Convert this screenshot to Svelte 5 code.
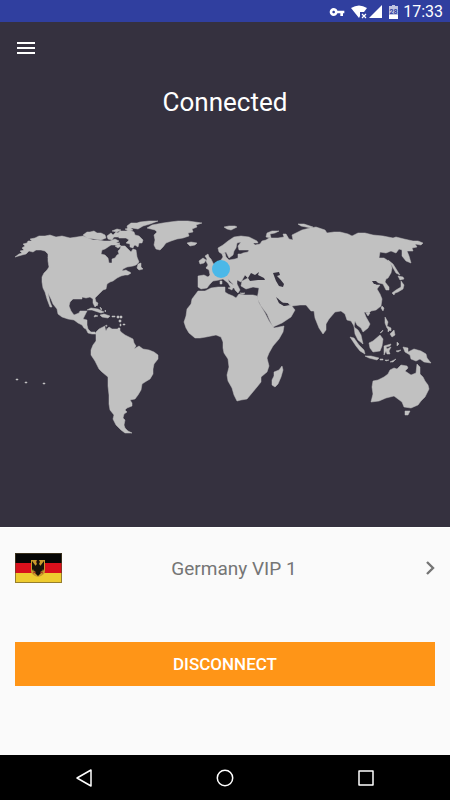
<script>
  let connected = $state(true);
  const server = 'Germany VIP 1';

  const land = [
    // North America
    'M15 257 19 254 22 253 20 251 24 250 22 248 25 246 23 244 27 243 28 241 32 241 30 239 35 238 39 236 45 236 50 235 56 237 62 236 70 238 77 237 83 236 88 238 93 240 98 240 104 241 110 241 115 239 119 241 116 243 120 243 117 245 111 245 108 247 105 249 102 250 101 254 105 255 108 258 109 263 112 263 112 259 115 258 117 255 119 254 118 251 120 249 121 246 125 246 128 249 131 252 133 249 136 250 137 257 139 262 136 265 133 266 127 267 123 269 122 271 126 270 129 272 131 273 128 275 125 275 121 276 117 278 113 281 110 282 107 284 106 289 103 290 100 293 97 296 95 298 96 302 97 305 95 307 93 303 93 299 90 297 86 298 82 297 82 299 77 299 73 299 70 302 69 306 71 311 74 315 79 313 80 311 84 311 87 311 85 315 83 319 87 320 87 325 88 329 91 332 95 332 96 334 92 334 88 333 86 329 84 328 82 325 78 323 74 320 68 319 62 317 58 314 57 309 53 304 51 299 48 293 50 302 52 307 50 307 47 299 45 292 43 288 42 282 42 277 44 273 47 270 49 267 48 261 48 254 45 251 41 250 36 250 33 252 29 251 26 254 22 255Z',
    'M83 235 87 232 90 232 94 231 97 233 101 233 105 235 106 238 101 240 94 239 87 238Z',
    'M107 236 111 233 113 235 116 232 120 234 118 237 114 237 112 240 108 239Z',
    'M117 234 120 231 126 231 129 230 134 232 135 235 139 236 143 240 142 243 139 243 138 247 135 245 132 247 130 244 126 243 129 240 126 238 119 238Z',
    'M127 226 131 223 137 223 140 222 149 221 158 221 150 224 143 226 138 229 132 228 128 230Z',
    'M112 231 117 229 121 230 117 232ZM125 229 130 228 133 230 129 231ZM130 244 134 245 133 248 130 247ZM115 246 119 244 121 246 118 248Z',
    'M137 268 138 264 141 263 141 267 143 269 139 270ZM125 272 130 272 129 274ZM49 264 51 264 53 268 51 269ZM48 257 50 259 50 262Z',
    // Caribbean
    'M87 310 91 308 98 309 104 312 101 313 92 310ZM100 315 104 314 110 316 108 318 102 317ZM95 315 98 316 94 317ZM112 316h3v1h-3zM96 302 98 303 97 306ZM100 307 102 309 101 310ZM105 310 106 311 105 312Z',
    'M117 316h2v2h-2zM120 316h2v2h-2zM119 320h2v2h-2zM120 324h1v2h-1zM123 324h2v1h-2zM118 328h2v2h-2z',
    // Greenland, Iceland and Svalbard
    'M147 228 152 225 163 223 170 222 178 221 188 221 195 222 202 223 196 225 197 227 192 229 193 232 188 233 189 236 183 238 177 239 171 241 166 243 163 247 160 250 156 249 154 245 155 240 154 235 157 232 155 230Z',
    'M187 243 191 242 197 243 195 245 190 246ZM224 227 229 226 235 226 237 227 231 230 227 229Z',
    // South America
    'M96 332 99 329 103 327 107 325 106 330 109 327 112 329 119 329 121 332 125 335 129 337 133 339 134 343 136 346 134 349 139 346 143 349 149 350 154 352 158 355 158 359 154 364 153 369 153 374 150 379 145 382 142 384 141 390 138 395 135 399 130 400 132 403 132 406 127 408 125 410 127 412 124 414 123 418 125 420 124 425 125 428 128 431 132 433 125 433 121 430 116 425 113 419 114 415 110 410 109 404 109 395 108 386 108 377 102 372 99 369 95 361 91 355 91 350 93 345 96 341Z',
    // Africa
    'M198 291 205 291 211 288 218 287 225 287 225 292 228 294 233 296 236 298 239 294 245 295 253 295 257 296 259 303 265 313 269 321 274 328 284 326 283 332 279 339 273 346 269 353 267 358 269 366 267 372 261 377 261 382 257 387 252 393 247 399 241 400 237 401 234 395 232 388 228 381 227 375 229 367 228 359 224 353 223 348 223 342 221 337 216 335 211 336 206 337 200 338 195 338 189 333 186 328 184 322 186 316 187 309 191 304 192 299Z',
    'M282 366 283 370 281 377 278 384 275 387 272 385 272 380 274 376 274 372 279 370Z',
    // Iberia to the Baltic, Russia, China, India and Arabia
    'M198 276 204 275 208 277 210 275 209 270 206 268 210 267 213 266 216 263 221 260 223 257 222 254 225 253 226 257 229 260 235 259 238 258 238 254 241 254 243 253 248 252 249 250 243 250 239 250 238 246 241 242 237 243 236 248 234 251 233 255 229 258 226 252 222 254 219 252 218 248 223 245 228 241 234 237 241 236 249 237 257 241 258 243 253 243 255 245 260 244 262 241 266 240 269 238 278 238 284 237 283 234 286 234 289 239 293 240 292 235 296 233 302 230 310 228 316 227 325 230 327 233 334 232 340 232 348 234 352 236 358 233 365 233 373 235 383 236 393 238 396 237 404 239 413 241 418 241 423 243 421 245 415 244 417 247 412 248 413 251 407 251 409 256 411 263 406 261 402 256 402 250 399 249 396 253 391 251 386 253 380 252 379 258 384 258 390 262 392 268 391 273 388 278 386 279 385 282 389 287 389 290 386 290 383 284 379 283 374 282 376 285 380 285 377 289 380 294 382 299 381 306 376 310 371 311 369 313 364 312 366 317 370 324 368 328 363 332 361 328 357 325 355 321 354 327 358 330 361 335 363 344 358 340 355 334 354 326 351 321 347 320 345 314 341 311 335 312 329 319 326 324 326 330 323 334 319 328 315 318 314 311 311 311 306 305 300 305 292 306 287 303 280 302 278 298 279 303 284 306 291 305 295 310 291 317 282 323 273 327 270 321 267 314 261 306 257 298 258 294 259 288 253 287 246 289 241 286 242 281 248 278 245 275 241 282 237 280 237 284 240 290 238 293 235 290 233 284 228 279 229 282 235 286 235 288 231 288 228 283 223 279 219 280 213 281 210 284 207 288 201 289 198 287Z',
    // British Isles and Mediterranean islands
    'M205 256 208 254 209 257 211 259 213 263 215 266 212 268 206 268 208 265 206 261 207 259ZM199 261 203 258 206 260 204 263 200 264ZM220 281h2v3h-2zM228 288 233 287 232 290ZM240 293 245 293 243 294Z',
    'M266 237 267 233 272 231 279 231 275 233 270 234 271 238ZM298 224 304 224 313 227 311 228 301 226Z',
    // Japan, Philippines and Indonesia
    'M388 260 393 264 398 272 400 275 396 273 392 266ZM398 276 403 277 404 279 400 280ZM401 281 404 285 403 289 398 292 395 293 394 295 392 293 396 290 401 287Z',
    'M382 306 384 308 383 311 381 308ZM366 313 370 313 368 316ZM385 317 388 322 387 326 391 328 391 331 387 328 385 323ZM390 334 394 330 395 335 392 337ZM388 327 390 330 388 332ZM383 330 380 333 382 332Z',
    'M350 337 354 338 359 345 364 350 365 354 360 351 356 346ZM365 356 371 356 379 358 377 360 369 358ZM380 359h3v1h-3zM385 360h4l-3 1zM390 362 396 359 393 362Z',
    'M369 343 373 341 380 335 383 339 382 346 380 351 373 352 370 348ZM384 346 391 344 390 346 386 347 387 349 391 347 389 351 390 354 387 354 386 351 384 355ZM397 342 399 344 397 346ZM396 351 401 350 398 352Z',
    'M403 347 408 348 408 352 414 349 421 351 426 354 427 358 431 363 424 362 420 359 416 361 411 359 410 355 405 352Z',
    // Australia
    'M373 381 378 380 384 377 388 374 390 370 394 368 397 369 401 365 407 366 408 368 405 371 411 375 416 373 417 364 420 367 420 374 423 377 425 381 428 385 429 389 425 397 421 401 418 405 411 408 404 407 402 402 398 399 394 396 386 398 379 401 371 402 373 394 372 387Z',
    'M405 411 410 411 408 415 405 415Z',
    // Hawaii
    'M16 379h2v1h-2zM25 382h2v1h-2zM43 383h2v1h-2z'
  ];

  const seas = [
    'M248 278 251 273 255 275 259 272 258 275 264 278 265 280 258 280 250 281Z',
    'M273 273 279 272 280 275 277 276 280 279 284 284 283 287 279 286 276 281Z',
    'M276 297 283 303 288 303 289 305 284 306 279 303ZM372 281 376 281 379 284 374 284ZM105 326 107 327 106 331Z'
  ];
</script>

<div class="screen">
  <header class="status">
    <svg class="key" viewBox="0 0 24 24" aria-hidden="true">
      <path fill-rule="evenodd" d="M12.65 10C11.83 7.67 9.61 6 7 6c-3.31 0-6 2.69-6 6s2.69 6 6 6c2.61 0 4.83-1.67 5.65-4H17v4h4v-4h2v-4H12.65zM7 14c-1.1 0-2-.9-2-2s.9-2 2-2 2 .9 2 2-.9 2-2 2z" />
    </svg>
    <svg class="signal" viewBox="0 0 32 14" aria-hidden="true">
      <path d="M0 3Q8-2 16 3L13 7H9v4L8 13z" />
      <path class="cross" d="M11 9l4 4M15 9l-4 4" />
      <path d="M31 0v13H18z" />
    </svg>
    <svg class="battery" viewBox="0 0 9 14" aria-hidden="true">
      <path opacity="0.7" d="M3 0h3v1h3v13H0V1h3z" />
      <path d="M0 10h9v4H0z" />
      <text x="4.5" y="9">28</text>
    </svg>
    <time>17:33</time>
  </header>

  <main>
    <section class="world">
      <button class="menu" aria-label="Open menu">
        <svg viewBox="0 0 18 12" aria-hidden="true">
          <path d="M0 1h18M0 6h18M0 11h18" />
        </svg>
      </button>
      <h1>{connected ? 'Connected' : 'Disconnected'}</h1>
      <svg class="map" viewBox="15 218 420 218" role="img" aria-label="World map">
        {#each land as d}
          <path class="land" {d} />
        {/each}
        {#each seas as d}
          <path class="sea" {d} />
        {/each}
        <circle cx="221" cy="269" r="9" />
      </svg>
    </section>

    <section class="controls">
      <button class="server">
        <svg class="flag" viewBox="0 0 47 30" aria-hidden="true">
          <path d="M0 0h47v10H0z" fill="#050505" />
          <path d="M0 10h47v10H0z" fill="#d8101c" />
          <path d="M0 20h47v10H0z" fill="#eecb2f" />
          <path d="M16 7h14v11q0 4-7 6q-7-2-7-6z" fill="#c99a2c" />
          <g fill="#17120a">
            <path d="M22 7h2l1 2-1 2 2 2v7l-3 3-3-3v-7l2-2-1-2z" />
            <path d="M20 12l-3-4v10l1-2 1 3 2-3zM26 12l3-4v10l-1-2-1 3-2-3z" />
          </g>
          <path d="M18 20l3-1M28 20l-3-1M22 9h-1" stroke="#a8331f" fill="none" />
          <rect x="0.5" y="0.5" width="46" height="29" fill="none" stroke="#5b4b2b" stroke-opacity="0.6" />
        </svg>
        <span>{server}</span>
        <svg class="chevron" viewBox="0 0 10 16" aria-hidden="true">
          <path d="M2 2l6 6-6 6" />
        </svg>
      </button>
      <button class="toggle" onclick={() => (connected = !connected)}>
        {connected ? 'DISCONNECT' : 'CONNECT'}
      </button>
    </section>
  </main>

  <nav>
    <button aria-label="Back">
      <svg viewBox="0 0 18 18"><path d="M16 1v16L2 9z" /></svg>
    </button>
    <button aria-label="Home">
      <svg viewBox="0 0 18 18"><circle cx="9" cy="9" r="7.7" /></svg>
    </button>
    <button aria-label="Recent apps">
      <svg viewBox="0 0 18 18"><path d="M2 2h14v14H2z" /></svg>
    </button>
  </nav>
</div>

<style>
  :global(body) {
    margin: 0;
  }
  .screen {
    display: flex;
    flex-direction: column;
    min-height: 100vh;
    background: #fafafa;
    font-family: Roboto, sans-serif;
  }
  svg {
    display: block;
  }
  button {
    padding: 0;
    border: 0;
    background: none;
    font: inherit;
    cursor: pointer;
  }
  .status {
    display: flex;
    align-items: center;
    justify-content: flex-end;
    height: 20px;
    padding: 2px 7px 0;
    background: #303f9f;
    color: #fff;
    font-size: 16px;
    line-height: 20px;
  }
  .status svg {
    fill: #fff;
  }
  .key {
    width: 16px;
    height: 16px;
    margin-right: 6px;
  }
  .signal {
    width: 32px;
    height: 14px;
    margin-right: 6px;
  }
  .signal .cross {
    stroke: #fff;
    stroke-width: 1.2;
  }
  .battery {
    width: 9px;
    height: 14px;
    margin-right: 5px;
  }
  .battery text {
    fill: #303f9f;
    font-size: 7px;
    font-weight: 700;
    text-anchor: middle;
  }
  main {
    display: flex;
    flex: 1;
    flex-direction: column;
  }
  .world {
    flex: 1;
    padding: 0 15px;
    background: #35313f;
  }
  .menu {
    display: block;
    padding: 20px 2px;
  }
  .menu svg {
    width: 18px;
    height: 12px;
    stroke: #fff;
    stroke-width: 2;
  }
  h1 {
    margin: 12px 0 100px;
    color: #fff;
    font-size: 26px;
    font-weight: 400;
    line-height: 32px;
    text-align: center;
  }
  .map {
    width: 100%;
    overflow: visible;
  }
  .land {
    fill: #c1c1c1;
    stroke: #c1c1c1;
    stroke-width: 0.5;
  }
  .sea {
    fill: #35313f;
  }
  .map circle {
    fill: #4bb8e8;
  }
  .controls {
    padding: 15px 15px 69px;
    border-top: 1px solid #fff;
  }
  .server {
    display: flex;
    align-items: center;
    width: 100%;
    height: 50px;
    margin-bottom: 49px;
    color: #757575;
    font-size: 19px;
  }
  .flag {
    width: 47px;
    height: 30px;
  }
  .server span {
    flex: 1;
    padding-right: 19px;
    text-align: center;
  }
  .chevron {
    width: 10px;
    height: 16px;
    fill: none;
    stroke: #757575;
    stroke-width: 2.4;
  }
  .toggle {
    display: block;
    width: 100%;
    height: 44px;
    background: #ff9517;
    color: #fff;
    font-size: 17px;
    font-weight: 500;
  }
  nav {
    display: flex;
    justify-content: center;
    gap: 93px;
    height: 45px;
    background: #000;
  }
  nav button {
    width: 48px;
  }
  nav svg {
    width: 18px;
    height: 18px;
    margin: 0 auto;
    fill: none;
    stroke: #fff;
    stroke-width: 1.5;
    stroke-linejoin: round;
  }
</style>
